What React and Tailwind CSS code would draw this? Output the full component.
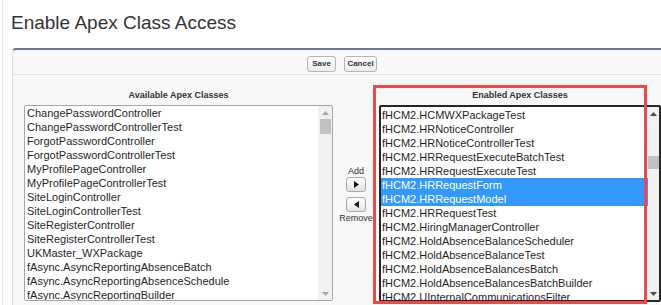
import React from "react";

const available = [
  "ChangePasswordController",
  "ChangePasswordControllerTest",
  "ForgotPasswordController",
  "ForgotPasswordControllerTest",
  "MyProfilePageController",
  "MyProfilePageControllerTest",
  "SiteLoginController",
  "SiteLoginControllerTest",
  "SiteRegisterController",
  "SiteRegisterControllerTest",
  "UKMaster_WXPackage",
  "fAsync.AsyncReportingAbsenceBatch",
  "fAsync.AsyncReportingAbsenceSchedule",
  "fAsync.AsyncReportingBuilder",
];

const enabled = [
  { name: "fHCM2.HCMWXPackageTest" },
  { name: "fHCM2.HRNoticeController" },
  { name: "fHCM2.HRNoticeControllerTest" },
  { name: "fHCM2.HRRequestExecuteBatchTest" },
  { name: "fHCM2.HRRequestExecuteTest" },
  { name: "fHCM2.HRRequestForm", selected: true },
  { name: "fHCM2.HRRequestModel", selected: true },
  { name: "fHCM2.HRRequestTest" },
  { name: "fHCM2.HiringManagerController" },
  { name: "fHCM2.HoldAbsenceBalanceScheduler" },
  { name: "fHCM2.HoldAbsenceBalanceTest" },
  { name: "fHCM2.HoldAbsenceBalancesBatch" },
  { name: "fHCM2.HoldAbsenceBalancesBatchBuilder" },
  { name: "fHCM2.UInternalCommunicationsFilter" },
];

function Arrow({ dir, color }) {
  const pts = dir === "up" ? "0,4 3.5,0 7,4" : "0,0 7,0 3.5,4";
  return (
    <svg width="7" height="4" viewBox="0 0 7 4">
      <polygon points={pts} fill={color} />
    </svg>
  );
}

function Scrollbar({ thumbTop, thumbH, arrowColor, width }) {
  return (
    <div className={`flex flex-col bg-[#f1f1f1] ${width}`}>
      <div className="h-[13px] flex items-center justify-center">
        <Arrow dir="up" color={arrowColor} />
      </div>
      <div className="flex-1 flex flex-col items-center">
        <div style={{ marginTop: thumbTop, height: thumbH }} className="w-[11px] bg-[#c1c1c1]" />
      </div>
      <div className="h-[13px] flex items-center justify-center">
        <Arrow dir="down" color={arrowColor} />
      </div>
    </div>
  );
}

function MoveButton({ dir }) {
  return (
    <div className="w-[20px] h-[15px] rounded-[3px] border border-[#a9a9a9] bg-gradient-to-b from-white to-[#e4e4e4] flex items-center justify-center">
      <svg width="5" height="7" viewBox="0 0 5 7">
        <polygon points={dir === "right" ? "0,0 5,3.5 0,7" : "5,0 0,3.5 5,7"} fill="#111" />
      </svg>
    </div>
  );
}

export default function App() {
  return (
    <div className="relative w-[661px] h-[305px] overflow-hidden bg-white pl-[2px] font-['Liberation_Sans',Arial,sans-serif]">
      <div className="h-full border-l border-[#e6e6e6] flex flex-col">
        {/* Title */}
        <h1 className="pt-[12px] pl-[8px] text-[19px] leading-[22px] text-[#333] font-normal">
          Enable Apex Class Access
        </h1>

        {/* Panel */}
        <div className="mt-[14px] ml-[9px] flex-1 flex flex-col bg-[#f8f8f8] border-t-2 border-l border-t-[#6b7794] border-l-[#e3e3e3] rounded-tl-[4px]">
          <div className="h-[25px] flex items-start pt-[6px] pl-[294px] gap-[8px] border-b border-[#e2e2e2]">
            <button className="w-[29px] h-[16px] rounded-[3px] border border-[#b5b5b5] bg-gradient-to-b from-white to-[#ececec] text-[8px] font-bold text-[#333] leading-none">
              Save
            </button>
            <button className="w-[33px] h-[16px] rounded-[3px] border border-[#b5b5b5] bg-gradient-to-b from-white to-[#ececec] text-[8px] font-bold text-[#333] leading-none">
              Cancel
            </button>
          </div>

          <div className="flex pl-[11px] pt-[13px]">
            {/* Available */}
            <div className="w-[309px] flex flex-col">
              <div className="h-[14px] leading-[14px] text-center text-[9px] font-bold text-[#333]">
                Available Apex Classes
              </div>
              <div className="mt-[3px] h-[196px] flex border border-[#a6a6a6] rounded-[2px] bg-white overflow-hidden">
                <div className="flex-1 overflow-hidden">
                  {available.map((n) => (
                    <div key={n} className="h-[14px] leading-[14px] pl-[2px] text-[11px] text-[#1f1f1f] whitespace-nowrap">
                      {n}
                    </div>
                  ))}
                </div>
                <Scrollbar thumbTop={0} thumbH={15} arrowColor="#a8a8a8" width="w-[14px]" />
              </div>
            </div>

            {/* Add / Remove */}
            <div className="w-[46px] flex flex-col items-center pt-[78px] text-[9px] leading-[10px] text-[#333]">
              <div>Add</div>
              <div className="mt-px">
                <MoveButton dir="right" />
              </div>
              <div className="mt-[5px]">
                <MoveButton dir="left" />
              </div>
              <div className="mt-[1px]">Remove</div>
            </div>

            {/* Enabled */}
            <div className="w-[282px] flex flex-col">
              <div className="h-[14px] leading-[14px] text-center text-[9px] font-bold text-[#333]">
                Enabled Apex Classes
              </div>
              <div className="mt-[3px] h-[197px] flex border-2 border-[#262626] rounded-[2px] bg-white overflow-hidden">
                <div className="flex-1 overflow-hidden pt-px">
                  {enabled.map((r) => (
                    <div
                      key={r.name}
                      className={`h-[14px] leading-[14px] pl-px text-[11px] whitespace-nowrap ${
                        r.selected ? "bg-[#3399ff] text-white" : "text-[#1f1f1f]"
                      }`}
                    >
                      {r.name}
                    </div>
                  ))}
                </div>
                <Scrollbar thumbTop={36} thumbH={13} arrowColor="#4a4a4a" width="w-[11px]" />
              </div>
            </div>
          </div>
        </div>
      </div>

      {/* highlight annotation */}
      <div className="absolute left-[373px] top-[85px] w-[274px] h-[219px] border-[3px] border-[#f04848] pointer-events-none" />
    </div>
  );
}
